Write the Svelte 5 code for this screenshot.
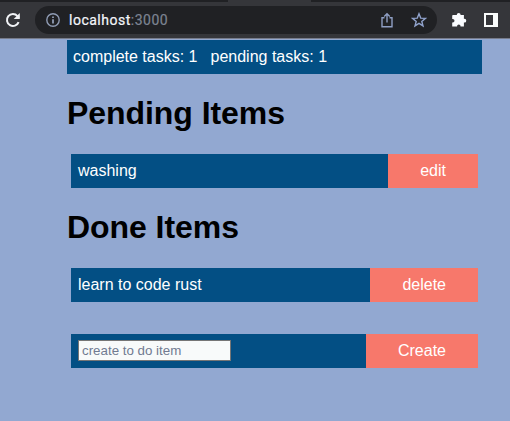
<script>
  const pending = ['washing'];
  const done = ['learn to code rust'];
</script>

<div class="window">
  <div class="tabs"><span></span></div>
  <header class="toolbar">
    <svg class="reload" width="18" height="18" viewBox="0 0 18 18" fill="none" stroke="#f1f3f6" stroke-width="2">
      <path d="M14.6 11.1A6 6 0 1 1 13.5 5.1L15 6.7" />
      <path d="M15.8 2v6.1H9.7z" fill="#f1f3f6" stroke="none" />
    </svg>
    <div class="address">
      <svg width="14" height="14" viewBox="0 0 14 14" fill="none" stroke="#8f9bb3">
        <circle cx="7" cy="7" r="6.2" stroke-width="1.4" />
        <path d="M7 6.2v4.2M7 3.4v1.7" stroke-width="1.8" />
      </svg>
      <span class="url">localhost<span class="port">:3000</span></span>
      <svg class="share" width="14" height="16" viewBox="0 0 14 16" fill="none" stroke="#8f9fc4" stroke-width="1.4">
        <path d="M4.5 5.7H2v9h10v-9H9.5" />
        <path d="M7 10.5V2M4.2 4.5L7 1.7l2.8 2.8" />
      </svg>
      <svg class="star" width="16" height="16" viewBox="0 0 16 16" fill="none" stroke="#91a3cc" stroke-width="1.4">
        <path d="M8 1.8l1.7 4.3 4.7.3-3.6 3 1.2 4.5L8 11.4l-4 2.5 1.2-4.5-3.6-3 4.7-.3z" />
      </svg>
    </div>
    <svg class="puzzle" width="16" height="16" viewBox="0 0 16 16" fill="#fafcff">
      <path d="M2 3.1h3.8V2.8a1.9 1.9 0 0 1 3.8 0v.3h3.3v3.7h.5a1.9 1.9 0 0 1 0 3.8h-.5v4H9.5v-.5a1.7 1.7 0 0 0-3.4 0v.5H1.2v-4.1h.6a1.7 1.7 0 0 0 0-3.4h-.6V3.9q0-.8.8-.8z" />
    </svg>
    <svg class="panel" width="14" height="14" viewBox="0 0 14 14">
      <path d="M0 0h14v14H0zM2 2v10h7V2z" fill="#fafcfc" fill-rule="evenodd" />
    </svg>
  </header>

  <main>
    <div class="summary">
      <span>complete tasks: {done.length}</span>
      <span>pending tasks: {pending.length}</span>
    </div>
    <h1>Pending Items</h1>
    {#each pending as title}
      <div class="item"><p>{title}</p><button>edit</button></div>
    {/each}
    <h1>Done Items</h1>
    {#each done as title}
      <div class="item"><p>{title}</p><button>delete</button></div>
    {/each}
    <div class="item create">
      <input type="text" placeholder="create to do item" />
      <button>Create</button>
    </div>
  </main>
</div>

<style>
  .window {
    height: 421px;
    overflow: hidden;
    background: #92a8d1;
    font: 16px/18px "Liberation Sans", Arial, sans-serif;
  }
  .tabs {
    height: 2px;
    background: #202124;
    display: flex;
  }
  .tabs span {
    margin-left: 228px;
    width: 83px;
    background: #35363a;
  }
  .toolbar {
    box-sizing: border-box;
    height: 37px;
    padding: 4px 12px 0 4px;
    display: flex;
    align-items: flex-start;
    background: #35363a;
    border-bottom: 1px solid #777c8b;
  }
  .reload { margin-top: 5px; }
  .address {
    box-sizing: border-box;
    width: 402px;
    height: 28px;
    margin-left: 13px;
    padding: 0 10px 0 11px;
    display: flex;
    align-items: center;
    border-radius: 14px;
    background: #202124;
  }
  .url {
    margin-left: 9px;
    color: #f4f6fa;
    font: 14px/20px Roboto, sans-serif;
    letter-spacing: 0.5px;
    -webkit-text-stroke: 0.2px currentColor;
  }
  .port { color: #7d8492; }
  .share { margin-left: auto; }
  .star { margin-left: 17px; }
  .puzzle { margin: 6px 0 0 14px; }
  .panel { margin: 7px 0 0 17px; }
  main {
    width: 415px;
    margin: 1px 0 0 67px;
  }
  .summary {
    box-sizing: border-box;
    height: 34px;
    padding: 8px 6px;
    display: flex;
    gap: 13px;
    background: #034f84;
    color: #fff;
  }
  h1 {
    margin: 20px 0 22px;
    color: #000;
    font-size: 32px;
    line-height: 38px;
    letter-spacing: -0.06px;
  }
  .item {
    height: 34px;
    margin: 0 4px;
    display: flex;
    align-items: center;
    justify-content: space-between;
    background: #034f84;
    color: #fff;
  }
  .item p { margin: 0 0 0 7px; }
  .item button {
    height: 34px;
    padding: 0 32px;
    border: 0;
    background: #f7786b;
    color: #fff;
    font: inherit;
  }
  .create { margin-top: 32px; }
  input {
    box-sizing: border-box;
    width: 153px;
    height: 21px;
    margin: 0 0 1px 7px;
    padding: 1px 3px;
    border: 1px solid #767676;
    background: #f8fafa;
    font: 13.33px "Liberation Sans", Arial, sans-serif;
  }
  input::placeholder { color: #717a91; opacity: 1; }
</style>
